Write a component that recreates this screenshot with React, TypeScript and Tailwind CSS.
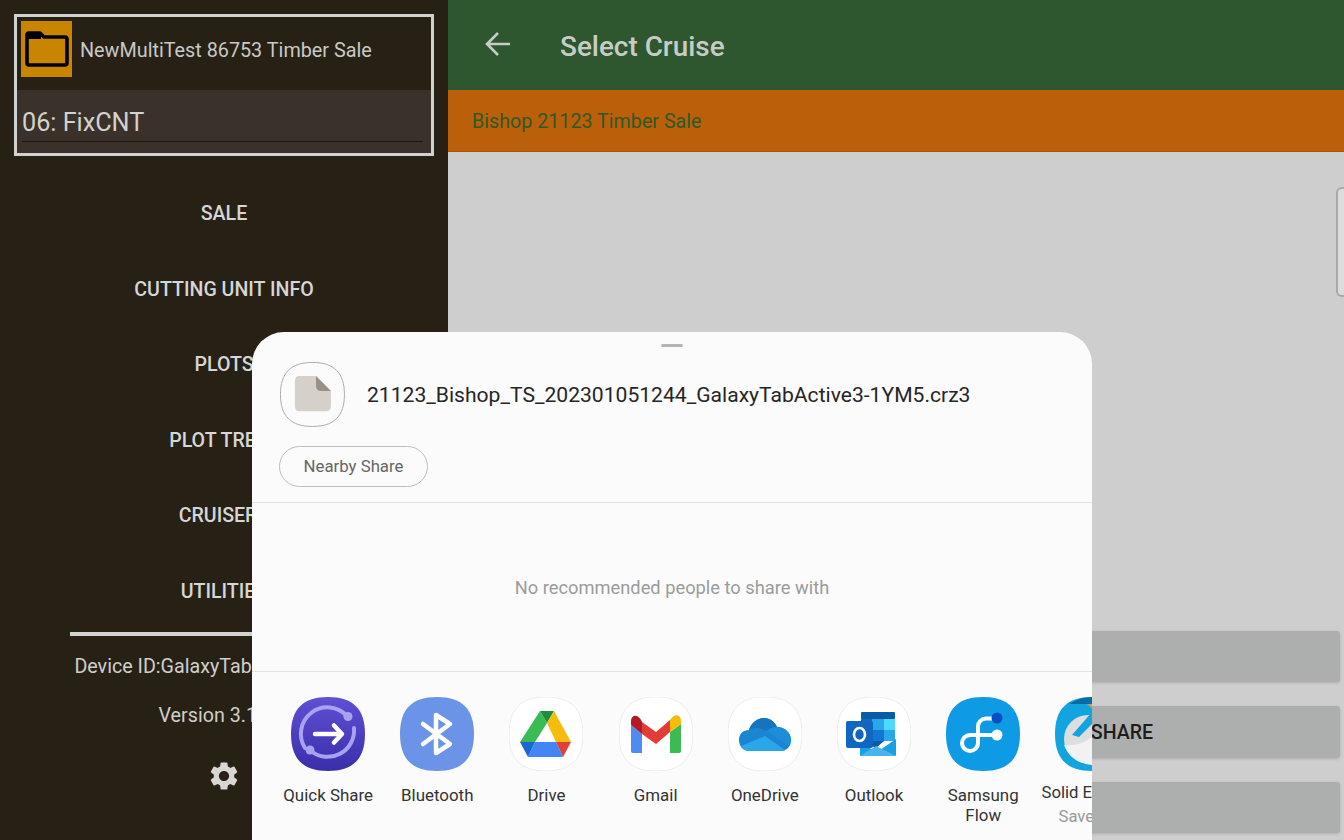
import type { ReactNode } from "react"

const SQUIRCLE = "M37 0C62 0 74 12 74 37C74 62 62 74 37 74C12 74 0 62 0 37C0 12 12 0 37 0Z"

const MENU_ITEMS = ["SALE", "CUTTING UNIT INFO", "PLOTS", "PLOT TREES", "CRUISERS", "UTILITIES"]

const IconBase = ({ fill = "#ffffff", stroke, children }: { fill?: string; stroke?: string; children?: ReactNode }) => (
  <svg width="74" height="74" viewBox="0 0 74 74" className="shrink-0">
    <path d={SQUIRCLE} fill={fill} stroke={stroke} strokeWidth={stroke ? 1 : 0} />
    {children}
  </svg>
)

const QuickShareIcon = () => (
  <IconBase fill="url(#qs)">
    <defs>
      <linearGradient id="qs" x1="0" y1="0" x2="0" y2="1">
        <stop offset="0" stopColor="#5f50d4" />
        <stop offset="1" stopColor="#3a2eaa" />
      </linearGradient>
    </defs>
    <g fill="none" stroke="#a9a2f2" strokeWidth="4" strokeLinecap="round">
      <path d="M56 19A26.5 26.5 0 0 0 14 51" />
      <path d="M20 54A26.5 26.5 0 0 0 63 31" />
    </g>
    <circle cx="57" cy="19.5" r="4.5" fill="#a9a2f2" />
    <circle cx="19" cy="53" r="4.5" fill="#a9a2f2" />
    <path d="M24 37H50M43 28.5L51 37L43 45.5" fill="none" stroke="#fff" strokeWidth="4.5" strokeLinecap="round" strokeLinejoin="round" />
  </IconBase>
)

const BluetoothIcon = () => (
  <IconBase fill="#6b94e8">
    <path d="M23 27L50 47L36 56V18L50 27L23 47" fill="none" stroke="#fff" strokeWidth="4.5" strokeLinecap="round" strokeLinejoin="round" />
  </IconBase>
)

const DriveIcon = () => (
  <IconBase stroke="#ececec">
    <polygon points="31,14 38,26 26,45 11,45" fill="#3cba54" />
    <polygon points="31,14 45,14 38,26" fill="#1e8e3e" />
    <polygon points="45,14 62,45 47,45 38,26" fill="#f4bc0c" />
    <polygon points="26,45 47,45 54,60 19,60" fill="#4285f4" />
    <polygon points="11,45 26,45 19,60" fill="#1967d2" />
    <polygon points="47,45 62,45 54,60" fill="#e0403a" />
  </IconBase>
)

const GmailIcon = () => (
  <IconBase stroke="#ececec">
    <path d="M12 28V54Q12 56 14 56H23V37Z" fill="#4e8cf0" />
    <path d="M51 35L62 27V54Q62 56 60 56H51Z" fill="#3cba54" />
    <polygon points="23,25 37,35 51,23 51,35 37,47 23,37" fill="#e03c38" />
    <path d="M12 28V24C12 18 19 16 23 25V37Z" fill="#b51a24" />
    <path d="M51 23C55 16 62 17 62 24V27L51 35Z" fill="#f4bc0c" />
  </IconBase>
)

const OneDriveIcon = () => (
  <IconBase stroke="#ececec">
    <path d="M22 54C14 54 11 48 11 43C11 37 15 33 21 33C23 26 29 21 36 21C42 21 47 25 49 30C57 30 63 36 63 43C63 50 58 54 53 54Z" fill="#1a86d2" />
    <path d="M21 33C23 26 29 21 36 21C42 21 47 25 49 30C44 30 41 32 39 34L31 31C27 31 24 31 21 33Z" fill="#1474c0" />
    <path d="M39 34C41 32 44 30 49 30C57 30 63 36 63 43C63 45 62 47 61 49Z" fill="#1c8ed8" />
    <path d="M22 54C17 54 14 52 13 49L37 39L57 53C56 54 54 54 53 54Z" fill="#2ba6e6" />
  </IconBase>
)

const OutlookIcon = () => (
  <IconBase stroke="#ececec">
    <rect x="24" y="15" width="34" height="7" rx="1" fill="#0a5aa6" />
    <rect x="24" y="22" width="11" height="11" fill="#0f6cbd" />
    <rect x="35" y="22" width="12" height="11" fill="#28a8ea" />
    <rect x="47" y="22" width="11" height="11" fill="#50d9ff" />
    <rect x="24" y="33" width="11" height="11" fill="#0f5fae" />
    <rect x="35" y="33" width="12" height="11" fill="#0f78d4" />
    <rect x="47" y="33" width="11" height="11" fill="#28a8ea" />
    <path d="M24 44L47 44L39 51Z" fill="#0c5aa8" />
    <path d="M23 59V46L40 55L59 42V58Q59 59 58 59Z" fill="#18a0e4" />
    <path d="M23 59L39 49L59 59Z" fill="#4ab4ec" />
    <rect x="9" y="24" width="27" height="27" rx="2" fill="#1066c0" />
    <ellipse cx="22.5" cy="37.5" rx="5.5" ry="6.5" fill="none" stroke="#fff" strokeWidth="2.6" />
  </IconBase>
)

const FlowIcon = () => (
  <IconBase fill="#0f9ae6">
    <path d="M46 21.5H40A8 8 0 0 0 32 29.5V46A8 8 0 1 1 24 38H50" fill="none" stroke="#fff" strokeWidth="4" strokeLinecap="round" />
    <circle cx="51" cy="38" r="5.5" fill="#fff" />
    <circle cx="51" cy="21" r="5.5" fill="#0a4fc0" />
  </IconBase>
)

const SolidIcon = () => (
  <IconBase fill="#12a4de">
    <path d="M14 7Q25 0 37 0Q50 0 60 7L38 7Z" fill="#0a6aa5" />
    <polygon points="32,7 52,7 44,18" fill="#c9a43a" />
    <circle cx="33" cy="42" r="24" fill="#dedede" />
    <polygon points="17,38 37,15 37,27 24,40" fill="#12a4de" />
    <path d="M9 48Q24 50 37 40V68Q16 66 9 48Z" fill="#f2f2f2" />
  </IconBase>
)

const APPS = [
  { label: "Quick Share", icon: <QuickShareIcon /> },
  { label: "Bluetooth", icon: <BluetoothIcon /> },
  { label: "Drive", icon: <DriveIcon /> },
  { label: "Gmail", icon: <GmailIcon /> },
  { label: "OneDrive", icon: <OneDriveIcon /> },
  { label: "Outlook", icon: <OutlookIcon /> },
  { label: "Samsung Flow", icon: <FlowIcon /> },
  { label: "Solid Explorer", sub: "Save to...", icon: <SolidIcon /> },
]

const FileIcon = () => (
  <svg width="65" height="65" viewBox="0 0 74 74" className="shrink-0">
    <path d={SQUIRCLE} fill="#fbfbfb" stroke="#a8a8a8" strokeWidth="1.1" transform="translate(0.5 0.5) scale(0.985)" />
    <path d="M22 16H41L58 33V50Q58 56 52 56H22Q17 56 17 50V22Q17 16 22 16Z" fill="#d6d0ca" />
    <path d="M41 16L58 33H47Q41 33 41 27Z" fill="#9a8f85" />
  </svg>
)

const Sidebar = () => (
  <div className="w-[448px] h-full shrink-0 bg-[#262015] flex flex-col items-center p-[14px]">
    <div className="w-[420px] h-[142px] shrink-0 border-[3px] border-[#d2d2d0] flex flex-col">
      <div className="h-[73px] shrink-0 flex pl-1 pt-1 gap-2">
        <div className="w-[51px] h-[56px] bg-[#c98500] flex items-center justify-center">
          <svg width="44" height="36" viewBox="0 0 44 36">
            <path d="M4 2H15L19 6H40Q42 6 42 8V32Q42 34 40 34H4Q2 34 2 32V4Q2 2 4 2Z" fill="#c98500" stroke="#000" strokeWidth="3.6" strokeLinejoin="round" />
            <rect x="2" y="3" width="14" height="5" fill="#000" />
          </svg>
        </div>
        <span className="text-[19.8px] leading-[60px] text-[#c9c9c5] whitespace-nowrap">NewMultiTest 86753 Timber Sale</span>
      </div>
      <div className="flex-1 bg-[#3a322a] px-[5px] pt-[16px]">
        <div className="h-[36px] border-b border-[#1d180f] mr-[3px] text-[25.2px] leading-[34px] text-[#d2d2ce]">06: FixCNT</div>
      </div>
    </div>
    <div className="mt-[19px] w-full flex flex-col shrink-0">
      {MENU_ITEMS.map((item) => (
        <div key={item} className="h-[75.6px] pt-[2px] flex items-center justify-center text-[19.6px] font-medium text-[#d6d6d4] whitespace-nowrap">
          {item}
        </div>
      ))}
    </div>
    <div className="w-[308px] h-1 mt-[3px] shrink-0 bg-[#d2d2d0]" />
    <div className="mt-[20px] text-[19.7px] leading-[22px] text-[#cfcfcb] whitespace-nowrap">Device ID:GalaxyTabActive3-1YM5</div>
    <div className="mt-[27px] text-[19.7px] leading-[22px] text-[#cfcfcb]">Version 3.1.5.0</div>
    <svg width="34" height="34" viewBox="0 0 24 24" className="mt-[32px] shrink-0" fill="#d6d6d4">
      <path d="M19.14 12.94c.04-.3.06-.61.06-.94 0-.32-.02-.64-.07-.94l2.03-1.58a.49.49 0 0 0 .12-.61l-1.92-3.32a.488.488 0 0 0-.59-.22l-2.39.96c-.5-.38-1.03-.7-1.62-.94l-.36-2.54a.484.484 0 0 0-.48-.41h-3.84c-.24 0-.43.17-.47.41l-.36 2.54c-.59.24-1.13.57-1.62.94l-2.39-.96c-.22-.08-.47 0-.59.22L2.74 8.87c-.12.21-.08.47.12.61l2.03 1.58c-.05.3-.09.63-.09.94s.02.64.07.94l-2.03 1.58a.49.49 0 0 0-.12.61l1.92 3.32c.12.22.37.29.59.22l2.39-.96c.5.38 1.03.7 1.62.94l.36 2.54c.05.24.24.41.48.41h3.84c.24 0 .44-.17.47-.41l.36-2.54c.59-.24 1.13-.56 1.62-.94l2.39.96c.22.08.47 0 .59-.22l1.92-3.32c.12-.22.07-.47-.12-.61l-2.01-1.58zM12 15.6c-1.98 0-3.6-1.62-3.6-3.6s1.62-3.6 3.6-3.6 3.6 1.62 3.6 3.6-1.62 3.6-3.6 3.6z" />
    </svg>
  </div>
)

const Main = () => (
  <div className="flex-1 h-full flex flex-col">
    <div className="h-[90px] shrink-0 bg-[#2e5730] flex items-center pl-[35px]">
      <svg width="30" height="30" viewBox="0 0 30 30" fill="none" stroke="#c6cdc4" strokeWidth="2.6" className="mb-[2px]">
        <path d="M27 15H4M15 4L4 15L15 26" />
      </svg>
      <span className="ml-[47px] mt-[4px] text-[27.9px] font-medium text-[#c6cdc4] leading-none">Select Cruise</span>
    </div>
    <div className="h-[62px] shrink-0 pt-[2px] bg-[#bc5f0a] border-b border-[#a9560a] flex items-center pl-6 text-[19.7px] text-[#2f5a25]">
      Bishop 21123 Timber Sale
    </div>
    <div className="flex-1 bg-[#cecece] flex flex-col items-end">
      <div className="mt-[35px] w-2 h-[110px] bg-[#dcdcdc] border-2 border-r-0 border-[#a9a9a9] rounded-l-[6px]" />
      <div className="mt-auto pb-[7px] pr-1 flex flex-col gap-[24px]">
        {["", "SHARE", ""].map((label, i) => (
          <div
            key={i}
            className="w-[436px] h-[51.5px] pt-[1px] bg-[#adafae] rounded-[3px] shadow-[0_1px_3px_rgba(0,0,0,0.15)] flex items-center justify-center text-[19.6px] font-medium text-[#1d1d1d]"
          >
            {label}
          </div>
        ))}
      </div>
    </div>
  </div>
)

const ShareSheet = () => (
  <div className="absolute left-[252px] top-[332px] w-[840px] h-[508px] bg-[#fbfbfb] rounded-t-[32px] overflow-hidden flex flex-col">
    <div className="mt-3 mx-auto w-[22px] h-[3px] rounded-full bg-[#b4b4b4] shrink-0" />
    <div className="mt-[15px] pl-[28px] flex items-center gap-[22px] shrink-0">
      <FileIcon />
      <span className="pt-[1px] text-[21.1px] leading-none text-[#252525] whitespace-nowrap">21123_Bishop_TS_202301051244_GalaxyTabActive3-1YM5.crz3</span>
    </div>
    <div className="mt-[19px] ml-[27px] w-[149px] h-[41px] shrink-0 rounded-full border border-[#bdbdbd] flex items-center justify-center text-[16.8px] text-[#666666]">
      Nearby Share
    </div>
    <div className="mt-[15px] h-[170px] pt-[1px] shrink-0 border-y border-[#e2e2e2] flex items-center justify-center text-[18.3px] text-[#9b9b9b]">
      No recommended people to share with
    </div>
    <div className="pt-[25px] pl-[21.5px] flex">
      {APPS.map((app) => (
        <div key={app.label} className="w-[109.2px] shrink-0 flex flex-col items-center">
          {app.icon}
          {app.sub ? (
            <>
              <span className="mt-[12px] text-[16.7px] leading-[20px] text-[#333333] whitespace-nowrap">{app.label}</span>
              <span className="mt-[4px] text-[16.7px] leading-[20px] text-[#9a9a9a] whitespace-nowrap">{app.sub}</span>
            </>
          ) : (
            <span className="mt-[14px] w-[100px] text-center text-[16.9px] leading-[20px] text-[#333333]">{app.label}</span>
          )}
        </div>
      ))}
    </div>
  </div>
)

const App = () => {
  return (
    <div className="relative w-[1344px] h-[840px] overflow-hidden flex font-['Roboto',sans-serif]">
      <Sidebar />
      <Main />
      <ShareSheet />
    </div>
  )
}

export default App
